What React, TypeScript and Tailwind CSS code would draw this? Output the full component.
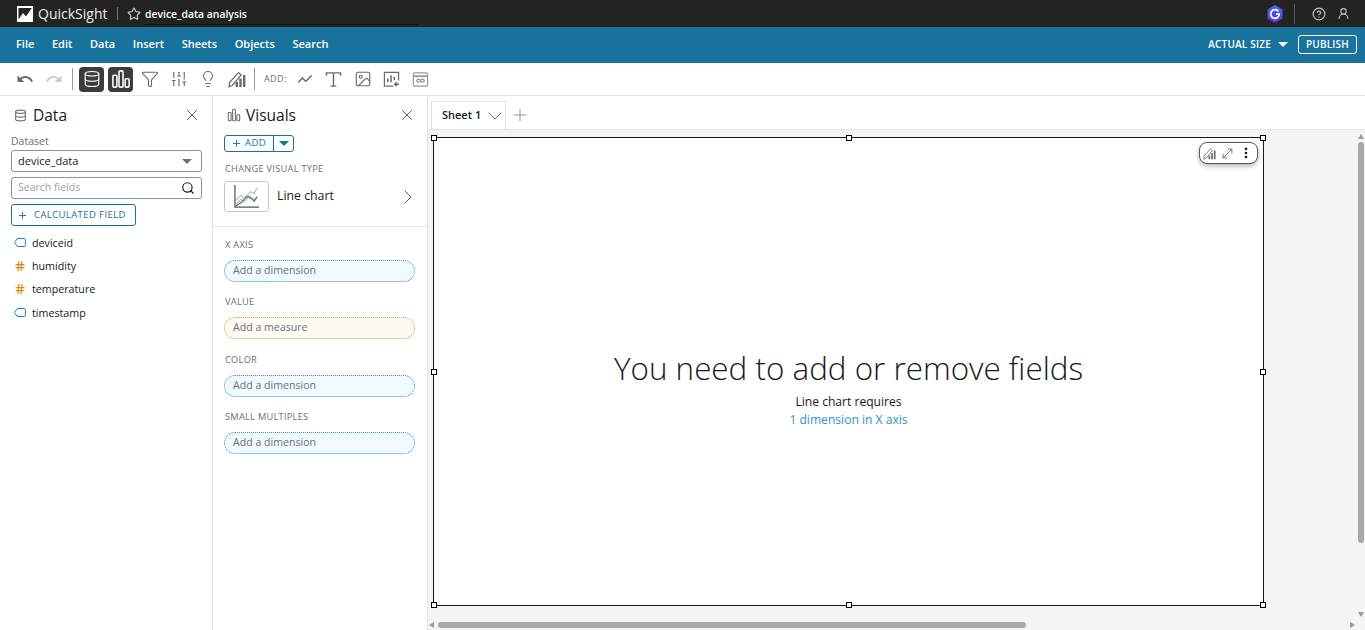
import { ReactNode } from 'react';
import { ChevronDown, ChevronRight, Plus, Search, X, Star, CircleHelp, UserRound, Funnel, SlidersVertical, Lightbulb, Image, MoveDiagonal, EllipsisVertical, Database, Hash } from 'lucide-react';
import { MdUndo, MdRedo } from 'react-icons/md';

const font = 'font-["Open_Sans","Noto_Sans",sans-serif]';

function BarsIcon({ className = '' }: { className?: string }) {
  return (
    <svg viewBox="0 0 18 18" className={className} fill="none" stroke="currentColor" strokeWidth="1.4">
      <rect x="1.7" y="5.7" width="3.6" height="10.6" rx="1" />
      <rect x="7.2" y="1.7" width="3.6" height="14.6" rx="1" />
      <rect x="12.7" y="8.7" width="3.6" height="7.6" rx="1" />
    </svg>
  );
}

function PencilBars({ className = '' }: { className?: string }) {
  return (
    <svg viewBox="0 0 18 18" className={className} fill="currentColor">
      <rect x="15" y="5" width="2.4" height="12" />
      <rect x="11.3" y="8.5" width="2.4" height="8.5" />
      <rect x="7.6" y="12" width="2.4" height="5" />
      <path d="M1 16.8 1.5 12.5 10.5 2.5 13.2 5 4.3 15.5Z" fill="none" stroke="currentColor" strokeWidth="1.2" />
    </svg>
  );
}

function TagIcon() {
  return (
    <svg viewBox="0 0 12 9" className="w-3 h-[9px] text-[#1f86b8]" fill="none" stroke="currentColor" strokeWidth="1">
      <path d="M3.2.5H10.2A1.2 1.2 0 0 1 11.4 1.7V7.300A1.2 1.2 0 0 1 10.2 8.500H3.200L.6 4.500Z" />
    </svg>
  );
}

function ToolButton({ children, active }: { children: ReactNode; active?: boolean }) {
  return (
    <div className={`w-[25px] h-[25px] rounded flex items-center justify-center ${active ? 'bg-[#3c3c3c] text-white' : 'text-[#666b70]'}`}>
      {children}
    </div>
  );
}

function Well({ label, placeholder, orange }: { label: string; placeholder: string; orange?: boolean }) {
  return (
    <div className="h-[57.500px] pl-[11px] pr-[12px]">
      <div className="text-[9.200px] leading-3 tracking-[0.3px] text-[#687078] mb-[9px] pl-px">{label}</div>
      <div className={`h-[22px] rounded-full border border-dotted px-2 flex items-center text-[10.600px] text-[#687078] ${orange ? 'border-[#e09a45] bg-[#fffaf3]' : 'border-[#2f97d0] bg-[#f1faff]'}`}>
        {placeholder}
      </div>
    </div>
  );
}

function Handle({ className }: { className: string }) {
  return <div className={`absolute w-[6px] h-[6px] bg-white border border-black ${className}`} />;
}

export default function App() {
  return (
    <div className={`w-[1365px] h-[630px] overflow-hidden flex flex-col bg-white text-[#16191f] ${font}`}>
      <header className="h-[27px] bg-[#232323] text-white flex items-center pl-[17px] pr-[15px] shrink-0">
        <svg viewBox="0 0 16 16" className="w-4 h-4" fill="#fff">
          <path d="M0 0H16V16H0ZM1.500 13.500 6 7l3 3.500L14.500 2.500V2H1.500Z" fillRule="evenodd" />
        </svg>
        <span className="ml-[5px] text-[14px] text-[#eeeeee] w-[71px]">QuickSight</span>
        <div className="w-px h-[13px] bg-[#777] ml-[8px]" />
        <Star size={14} className="ml-[9px] text-[#c8c8c8]" />
        <span className="ml-[3px] pl-px text-[10.400px] font-semibold w-[274px] border-b border-[#111] leading-[19px] mt-[2px]">device_data analysis</span>
        <div className="ml-auto flex items-center">
          <svg viewBox="0 0 16 18" className="w-[16px] h-[18px]">
            <defs>
              <linearGradient id="hex" x1="0" y1="0" x2="0" y2="1">
                <stop offset="0" stopColor="#3d6cf0" />
                <stop offset="1" stopColor="#6a2fd6" />
              </linearGradient>
            </defs>
            <path d="M8 0 15.500 4.500V13.500L8 18 .5 13.500V4.500Z" fill="url(#hex)" />
            <path d="M11.500 6.500A4.300 4.300 0 1 0 12.300 9H9" fill="none" stroke="#fff" strokeWidth="1.700" />
          </svg>
          <div className="w-px h-5 bg-[#5a5a5a] ml-[11px]" />
          <CircleHelp size={14} className="ml-[17px] text-[#c4c4c4]" />
          <UserRound size={13} className="ml-[11px] text-[#c4c4c4]" />
        </div>
      </header>

      <nav className="h-[36px] bg-[#18729c] text-white flex items-center pl-[16px] pr-[8px] pb-[2px] shrink-0 text-[11px] font-semibold">
        <div className="flex gap-[17.650px]">
          {['File', 'Edit', 'Data', 'Insert', 'Sheets', 'Objects', 'Search'].map((m) => (
            <span key={m}>{m}</span>
          ))}
        </div>
        <span className="ml-auto text-[10px] font-semibold tracking-[0.2px]">ACTUAL SIZE</span>
        <div className="ml-[7px] w-0 h-0 border-x-[5px] border-x-transparent border-t-[5px] border-t-white" />
        <div className="ml-[10px] w-[59px] h-[19px] border border-white rounded-[3px] flex items-center justify-center text-[10px] font-semibold tracking-[0.2px]">PUBLISH</div>
      </nav>

      <div className="h-[33px] border-b border-[#e3e3e3] flex items-center pl-[16px] shrink-0">
        <MdUndo size={18} className="text-[#666b70]" />
        <MdRedo size={18} className="ml-[11px] text-[#c9cdd1]" />
        <div className="w-px h-[22px] bg-[#999] ml-[9px] mr-[6px]" />
        <div className="flex items-center gap-[4px]">
          <ToolButton active><Database size={18} strokeWidth={1.500} /></ToolButton>
          <ToolButton active><BarsIcon className="w-[20px] h-[20px]" /></ToolButton>
          <ToolButton><Funnel size={18} strokeWidth={1.500} /></ToolButton>
          <ToolButton><SlidersVertical size={18} strokeWidth={1.500} /></ToolButton>
          <ToolButton><Lightbulb size={18} strokeWidth={1.500} /></ToolButton>
          <ToolButton><PencilBars className="w-[18px] h-[18px]" /></ToolButton>
        </div>
        <div className="w-px h-[22px] bg-[#999] ml-[5px]" />
        <span className="ml-[9px] w-[23px] text-[9px] text-[#687078] tracking-[0.4px]">ADD:</span>
        <div className="ml-[5px] flex items-center gap-[4px]">
          <ToolButton>
            <svg viewBox="0 0 18 18" className="w-4 h-4" fill="none" stroke="currentColor" strokeWidth="1.700"><path d="M1.500 13 6 8l4 3.500 6.500-6.500" /></svg>
          </ToolButton>
          <ToolButton>
            <svg viewBox="0 0 18 18" className="w-[17px] h-[17px]" fill="none" stroke="currentColor" strokeWidth="1.500">
              <path d="M1.500 5V2H16.500V5M9 2V16M6 16H12" />
            </svg>
          </ToolButton>
          <ToolButton><Image size={18} strokeWidth={1.500} /></ToolButton>
          <ToolButton>
            <svg viewBox="0 0 18 18" className="w-[17px] h-[17px]" fill="none" stroke="currentColor" strokeWidth="1.300">
              <path d="M11 16H1.500V1.500H16.500V10" />
              <path d="M5 12V8M8.500 12V4.500M12 9.500V6M17 14H12.500M14.500 12l-2 2 2 2" strokeWidth="1.600" />
            </svg>
          </ToolButton>
          <div className="w-[25px] h-[25px] flex items-center justify-center text-[#989898]">
            <svg viewBox="0 0 18 18" className="w-[17px] h-[17px]" fill="none" stroke="currentColor" strokeWidth="1.300">
              <rect x="1.500" y="2" width="15" height="14" rx="1.500" />
              <path d="M1.500 5.500H16.500" strokeWidth="2" />
              <rect x="5" y="8.800" width="4" height="2.800" rx="1.400" />
              <rect x="9" y="8.800" width="4" height="2.800" rx="1.400" />
            </svg>
          </div>
        </div>
      </div>

      <div className="flex-1 min-h-0 flex">
        <aside className="w-[213px] border-r border-[#e3e3e3] shrink-0 px-[11px]">
          <div className="h-[39px] flex items-center pb-[0.500px]">
            <Database size={13} className="ml-[3px] text-[#687078]" />
            <span className="ml-[6px] text-[15.500px] font-medium">Data</span>
            <X size={18} strokeWidth={1.300} className="ml-auto text-[#545b64]" />
          </div>
          <div className="text-[10.500px] leading-3 text-[#687078]">Dataset</div>
          <div className="mt-[3px] h-[22px] w-[191px] border border-[#879596] rounded-[3px] flex items-center px-[6px] text-[11px]">
            device_data
            <div className="ml-auto mr-[3px] w-0 h-0 border-x-[5px] border-x-transparent border-t-[5px] border-t-[#687078]" />
          </div>
          <div className="mt-[5px] h-[22px] w-[191px] border border-[#879596] rounded-[3px] flex items-center px-[6px] text-[10.500px] text-[#9aa0a6]">
            Search fields
            <Search size={14} strokeWidth={2} className="ml-auto text-[#16191f]" />
          </div>
          <div className="mt-[5px] h-[22px] w-[125px] border border-[#18729c] rounded-[3px] flex items-center text-[#18729c] text-[9.500px] font-medium tracking-[0.4px]">
            <Plus size={11} className="ml-[5px]" />
            <span className="ml-[6px]">CALCULATED FIELD</span>
          </div>
          <div className="mt-[5px] text-[10.700px]">
            {[
              ['deviceid', false],
              ['humidity', true],
              ['temperature', true],
              ['timestamp', false],
            ].map(([name, num]) => (
              <div key={name as string} className="h-[23.400px] flex items-center">
                <span className="w-[21px] pl-[3px] flex items-center">
                  {num ? <Hash size={12} strokeWidth={2.500} className="text-[#dd8a1e]" /> : <TagIcon />}
                </span>
                {name}
              </div>
            ))}
          </div>
        </aside>

        <aside className="w-[215px] border-r border-[#e3e3e3] shrink-0 flex flex-col">
          <div className="h-[39px] flex items-center px-[11px] pb-[0.500px]">
            <BarsIcon className="w-[14px] h-[14px] text-[#687078] ml-[3px]" />
            <span className="ml-[5px] text-[15.500px] font-medium">Visuals</span>
            <X size={18} strokeWidth={1.300} className="ml-auto text-[#545b64]" />
          </div>
          <div className="px-[11px] border-b border-[#e3e3e3] pb-[14px]">
            <div className="w-[70px] h-[17px] border border-[#18729c] rounded-[3px] flex items-center text-[#18729c] text-[9.500px] font-medium tracking-[0.4px]">
              <Plus size={11} className="ml-[6px]" />
              <span className="ml-[3px] w-[28px]">ADD</span>
              <div className="w-px h-full bg-[#18729c]" />
              <div className="ml-[5px] w-0 h-0 border-x-[5px] border-x-transparent border-t-[5px] border-t-[#18729c]" />
            </div>
            <div className="mt-[11px] pl-px text-[9.200px] leading-3 tracking-[0.3px] text-[#687078]">CHANGE VISUAL TYPE</div>
            <div className="mt-[6px] flex items-center">
              <div className="w-[45px] h-[31px] border border-[#c8c8c8] rounded-[3px] flex items-center justify-center">
                <svg viewBox="0 0 28 26" className="w-[27px] h-[25px]" fill="none" strokeWidth="1.200">
                  <path d="M2 1V24H27" stroke="#555" strokeWidth="1.300" />
                  <path d="M3 17 8 12l4 3 6-7 4 2 3-6" stroke="#9cc8da" />
                  <path d="M3 22l5-6 4 2 5-6 4 4 4-1" stroke="#f0a83c" />
                  <path d="M3 23l6-4 5-6 5 2 3 3 3-5" stroke="#1f7ea8" />
                </svg>
              </div>
              <span className="ml-[8px] text-[12.300px]">Line chart</span>
              <ChevronRight size={24} strokeWidth={1} className="ml-auto -mr-[4px] text-[#545b64]" />
            </div>
          </div>
          <div className="pt-[11.500px]">
            <Well label="X AXIS" placeholder="Add a dimension" />
            <Well label="VALUE" placeholder="Add a measure" orange />
            <Well label="COLOR" placeholder="Add a dimension" />
            <Well label="SMALL MULTIPLES" placeholder="Add a dimension" />
          </div>
        </aside>

        <main className="flex-1 min-w-0 flex flex-col">
          <div className="h-[34px] border-b border-[#e3e3e3] flex items-end pl-[3px] shrink-0">
            <div className="w-[75px] h-[28px] border border-b-0 border-[#e3e3e3] flex items-center pl-[10px] text-[11px] font-semibold shrink-0 whitespace-nowrap">
              Sheet 1
              <ChevronDown size={24} strokeWidth={1} className="ml-[2px] shrink-0 text-[#687078]" />
            </div>
            <Plus size={20} strokeWidth={1.100} className="ml-[4px] mb-[4px] text-[#879596]" />
          </div>
          <div className="flex-1 min-h-0 flex bg-[#f4f4f4]">
            <div className="flex-1 min-w-0 flex flex-col">
              <div className="flex-1 min-h-0 pl-[5px] pt-[7px]">
                <div className="relative w-[831px] h-[469px] bg-white border border-[#16191f] flex flex-col items-center">
                  <Handle className="-top-[3px] -left-[3px]" />
                  <Handle className="-top-[3px] left-[412px]" />
                  <Handle className="-top-[3px] -right-[3px]" />
                  <Handle className="top-[231px] -left-[3px]" />
                  <Handle className="top-[231px] -right-[3px]" />
                  <Handle className="-bottom-[3px] -left-[3px]" />
                  <Handle className="-bottom-[3px] left-[412px]" />
                  <Handle className="-bottom-[3px] -right-[3px]" />
                  <div className="absolute top-[4px] right-[5px] w-[59px] h-[22px] bg-white border border-[#545b64] rounded-lg shadow-[0_2px_5px_rgba(0,0,0,0.3)] flex items-center pl-[3px] text-[#687078]">
                    <PencilBars className="w-[13px] h-[13px]" />
                    <MoveDiagonal size={15} strokeWidth={1.500} className="ml-[4px]" />
                    <EllipsisVertical size={14} strokeWidth={2.500} className="ml-[4px] text-[#16191f]" />
                  </div>
                  <div className="mt-[210px] text-[31.400px] leading-[40px] font-light text-[#16191f]">You need to add or remove fields</div>
                  <div className="mt-[5px] text-[12.100px] leading-[18px]">Line chart requires</div>
                  <div className="text-[12.100px] leading-[18px] text-[#2b94cf]">1 dimension in X axis</div>
                </div>
              </div>
              <div className="h-[10px] bg-[#f4f4f4] flex items-center shrink-0 pl-px">
                <div className="w-0 h-0 border-y-[3.500px] border-y-transparent border-r-[5px] border-r-[#9a9a9a]" />
                <div className="ml-[4px] w-[588px] h-[6px] rounded-full bg-[#a8a8a8]" />
                <div className="ml-auto mr-[2px] w-0 h-0 border-y-[3.500px] border-y-transparent border-l-[5px] border-l-[#9a9a9a]" />
              </div>
            </div>
            <div className="w-[8px] shrink-0 flex flex-col items-center pt-[4px] pb-[13px]">
              <div className="w-0 h-0 border-x-[3.500px] border-x-transparent border-b-[5px] border-b-[#9a9a9a]" />
              <div className="mt-[3px] w-[6px] h-[401px] rounded-full bg-[#a8a8a8]" />
              <div className="mt-auto w-0 h-0 border-x-[3.500px] border-x-transparent border-t-[5px] border-t-[#9a9a9a]" />
            </div>
          </div>
        </main>
      </div>
    </div>
  );
}
